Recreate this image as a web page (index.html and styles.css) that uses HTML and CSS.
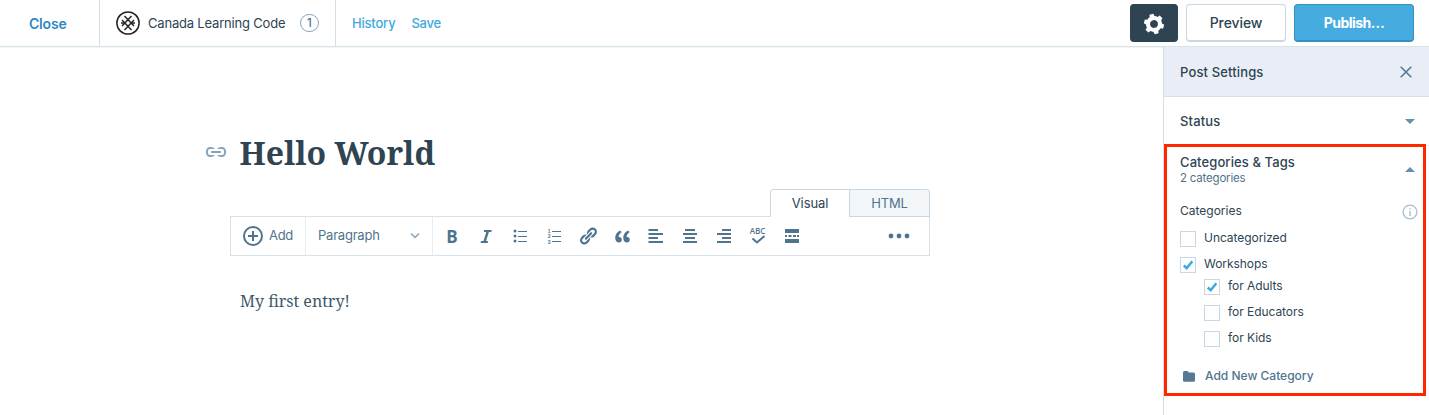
FILE: index.html
```
<!DOCTYPE html>
<html lang="en">
<head>
<meta charset="utf-8">
<title>Hello World - Post Editor</title>
<link rel="stylesheet" href="styles.css">
</head>
<body>
<header class="topbar">
  <a class="close">Close</a>
  <div class="site">
    <svg class="logo" width="24" height="24" viewBox="0 0 24 24" fill="none" stroke="#252525"><circle cx="12" cy="12" r="11.100" stroke-width="1.500"/><path d="M8.500 5l9.500 10M6 9l9.500 10M15.500 5L6 15M18 9L8.500 19" stroke-width="1.500"/><path d="M5 12h3M16 12h3" stroke-width="1.500"/></svg>
    <span class="site-name">Canada Learning Code</span>
    <span class="count">1</span>
  </div>
  <nav class="actions"><a class="history">History</a><a class="save">Save</a></nav>
  <div class="buttons">
    <button class="btn cog"><svg width="24" height="24" viewBox="0 0 24 24"><path transform="rotate(-15 12 12)" fill="#fff" d="M20 12c0-.568-.06-1.122-.174-1.656l1.834-1.612-2-3.464-2.322.786c-.82-.736-1.787-1.308-2.86-1.657L14 2h-4l-.48 2.396c-1.07.35-2.04.92-2.858 1.657L4.34 5.268l-2 3.464 1.834 1.612C4.06 10.878 4 11.432 4 12s.06 1.122.174 1.656L2.34 15.268l2 3.464 2.322-.786c.82.736 1.787 1.308 2.86 1.657L10 22h4l.48-2.396c1.07-.35 2.038-.92 2.858-1.657l2.322.786 2-3.464-1.834-1.613c.113-.535.174-1.09.174-1.656zm-8 4c-2.210 0-4-1.790-4-4s1.790-4 4-4 4 1.790 4 4-1.790 4-4 4z"/></svg></button>
    <button class="btn preview"><span>Preview</span></button>
    <button class="btn publish"><span>Publish…</span></button>
  </div>
</header>
<div class="body">
  <main class="editor">
    <div class="title-row">
      <svg class="permalink" width="24" height="24" viewBox="0 0 24 24"><path fill="#87a6bc" d="M17 13H7v-2h10v2zm1-6h-1c-1.631 0-3.065.792-3.977 2H18c1.103 0 2 .897 2 2v2c0 1.103-.897 2-2 2h-4.977c.913 1.208 2.347 2 3.977 2h1c2.209 0 4-1.791 4-4v-2c0-2.209-1.791-4-4-4zM2 11v2c0 2.209 1.791 4 4 4h1c1.630 0 3.065-.792 3.977-2H6c-1.103 0-2-.897-2-2v-2c0-1.103.897-2 2-2h4.977C10.065 7.792 8.631 7 7 7H6c-2.209 0-4 1.791-4 4z"/></svg>
      <h1 class="title">Hello World</h1>
    </div>
    <div class="tabs"><span class="tab active">Visual</span><span class="tab">HTML</span></div>
    <div class="toolbar">
      <div class="add"><svg width="22" height="22" viewBox="0 0 22 22" fill="none" stroke="#4f748e" stroke-width="2"><circle cx="11" cy="11" r="9"/><path d="M11 6v10M6 11h10"/></svg><span>Add</span></div>
      <div class="format"><span>Paragraph</span><svg width="12" height="8" viewBox="0 0 12 8" fill="none" stroke="#87a6bc" stroke-width="1.500"><path d="M2 1.500l4 4 4-4"/></svg></div>
      <div class="tools">
        <span class="tool bold">B</span>
        <span class="tool"><svg width="20" height="20" viewBox="0 0 20 20" fill="none" stroke="#4f748e"><path d="M8 5h7.500M4.800 16h7" stroke-width="2"/><path d="M11.900 5L8.500 16" stroke-width="2.500"/></svg></span>
        <span class="tool"><svg width="20" height="20" viewBox="0 0 20 20"><g fill="#4f748e"><circle cx="5" cy="5" r="1.500"/><circle cx="5" cy="10" r="1.500"/><circle cx="5" cy="15" r="1.500"/><path d="M8 5h9v1H8zM8 10h9v1H8zM8 15h9v1H8z"/></g></svg></span>
        <span class="tool"><svg width="20" height="20" viewBox="0 0 20 20"><g fill="#4f748e"><path d="M8 5h9v1H8zM8 10h9v1H8zM8 15h9v1H8z"/><g class="digits"><text x="3.800" y="6.500">1</text><text x="3.800" y="12">2</text><text x="3.800" y="17.500">3</text></g></g></svg></span>
        <span class="tool"><svg width="20" height="20" viewBox="0 0 20 20"><path fill="#4f748e" d="M17.740 2.760c1.680 1.690 1.680 4.410 0 6.100l-1.530 1.520c-1.120 1.120-2.700 1.470-4.140 1.090l2.620-2.610.76-.77.76-.76c.84-.84.84-2.200 0-3.040-.84-.85-2.200-.85-3.040 0l-.77.76-3.380 3.380c-.37-1.440-.02-3.020 1.100-4.140l1.520-1.530c1.690-1.680 4.420-1.680 6.100 0zM8.590 13.430l5.340-5.340c.42-.42.42-1.100 0-1.520-.44-.43-1.130-.39-1.530 0l-5.330 5.340c-.42.42-.42 1.100 0 1.520.44.43 1.130.39 1.520 0zm-.76 2.290l4.140-4.150c.38 1.440.03 3.020-1.090 4.140l-1.520 1.530c-1.690 1.680-4.410 1.680-6.100 0-1.680-1.680-1.680-4.420 0-6.100l1.530-1.520c1.120-1.120 2.700-1.470 4.140-1.100l-4.140 4.150c-.85.84-.85 2.200 0 3.050.84.84 2.200.84 3.040 0z"/></svg></span>
        <span class="tool"><svg width="21" height="21" viewBox="0 0 24 24"><path fill="#4f748e" d="M11.192 15.757c0-.88-.23-1.618-.69-2.217-.326-.412-.768-.683-1.327-.812-.55-.128-1.070-.137-1.540-.028-.16-.95.1-1.956.76-3.022.66-1.065 1.515-1.867 2.558-2.403L9.373 5c-.8.396-1.560.898-2.260 1.505-.71.607-1.340 1.305-1.900 2.094s-.98 1.680-1.250 2.690-.346 2.040-.217 3.100c.168 1.400.62 2.520 1.356 3.350.735.84 1.652 1.260 2.748 1.260.965 0 1.766-.29 2.400-.878.628-.576.94-1.365.94-2.368zm9.124 0c0-.88-.23-1.618-.69-2.217-.326-.42-.77-.692-1.327-.817-.56-.124-1.074-.13-1.540-.022-.16-.94.09-1.950.75-3.020.66-1.060 1.514-1.860 2.557-2.400L18.490 5c-.8.396-1.555.898-2.260 1.505-.708.607-1.340 1.305-1.894 2.094-.556.79-.97 1.680-1.240 2.690-.273 1-.345 2.040-.217 3.100.165 1.400.615 2.520 1.350 3.350.732.833 1.646 1.250 2.742 1.250.967 0 1.768-.29 2.402-.876.627-.576.942-1.365.942-2.368z"/></svg></span>
        <span class="tool"><svg width="20" height="20" viewBox="0 0 20 20" fill="#4f748e"><path d="M2.500 3h9.500v2H2.500zM2.500 7H17v2H2.500zM2.500 11h9.500v2H2.500zM2.500 15H17v2H2.500z"/></svg></span>
        <span class="tool"><svg width="20" height="20" viewBox="0 0 20 20" fill="#4f748e"><path d="M5 3h10v2H5zM3 7h14v2H3zM5 11h10v2H5zM3 15h14v2H3z"/></svg></span>
        <span class="tool"><svg width="20" height="20" viewBox="0 0 20 20" fill="#4f748e"><path d="M8 3h9v2H8zM3 7h14v2H3zM8 11h9v2H8zM3 15h14v2H3z"/></svg></span>
        <span class="tool"><svg class="spell" width="20" height="20" viewBox="0 0 20 20"><text x="9.500" y="8">ABC</text><path d="M4.500 12.500l4.500 4 7.500-6.500" fill="none" stroke="#4f748e" stroke-width="2"/></svg></span>
        <span class="tool"><svg width="20" height="20" viewBox="0 0 20 20" fill="#4f748e"><path d="M3 3h14v4H3zM3 9h2v2H3zM6.500 9h3v2h-3zM11 9h3v2h-3zM15 9h2v2h-2zM3 13h14v4H3z"/></svg></span>
      </div>
      <svg class="more" width="24" height="24" viewBox="0 0 24 24" fill="#4f748e"><circle cx="4" cy="12" r="2.400"/><circle cx="12" cy="12" r="2.400"/><circle cx="20" cy="12" r="2.400"/></svg>
    </div>
    <p class="content">My first entry!</p>
  </main>
  <aside class="sidebar">
    <div class="side-head"><span>Post Settings</span><svg width="12" height="12" viewBox="0 0 12 12" fill="none" stroke="#4f748e" stroke-width="1.500"><path d="M.7.7l10.600 10.600M11.300.7L.7 11.300"/></svg></div>
    <div class="side-status"><span>Status</span><i class="caret down"></i></div>
    <div class="side-cats-head"><div><div class="cats-title">Categories &amp; Tags</div><div class="cats-sub">2 categories</div></div><i class="caret up"></i></div>
    <div class="cats-label"><span>Categories</span><svg width="16" height="16" viewBox="0 0 16 16" fill="none" stroke="#a8bece"><circle cx="8" cy="8" r="6.900" stroke-width="1.400"/><path d="M8 7v5M8 4.200v1.500" stroke-width="1.400"/></svg></div>
    <div class="cat"><i class="box"></i><span>Uncategorized</span></div>
    <div class="cat tight"><i class="box"><svg width="14" height="14" viewBox="0 0 14 14"><path d="M2.800 7.500l2.900 2.700L11.300 3.200" fill="none" stroke="#3fa9dd" stroke-width="2.600"/></svg></i><span>Workshops</span></div>
    <div class="cat child"><i class="box"><svg width="14" height="14" viewBox="0 0 14 14"><path d="M2.800 7.500l2.900 2.700L11.300 3.200" fill="none" stroke="#3fa9dd" stroke-width="2.600"/></svg></i><span>for Adults</span></div>
    <div class="cat child"><i class="box"></i><span>for Educators</span></div>
    <div class="cat child"><i class="box"></i><span>for Kids</span></div>
    <div class="new-cat"><svg width="12" height="11" viewBox="0 0 12 11"><path fill="#537994" d="M1.500 0h3L6 1.500h4.500A1.500 1.500 0 0 1 12 3v6.500a1.300 1.300 0 0 1-1.300 1.300H1.300A1.300 1.300 0 0 1 0 9.500v-8A1.500 1.500 0 0 1 1.500 0z"/></svg><span>Add New Category</span></div>
    <div class="highlight"></div>
  </aside>
</div>
</body>
</html>
```
FILE: styles.css
```
* { box-sizing: border-box; }
body { margin: 0; width: 1429px; height: 415px; overflow: hidden; background: #fff; color: #2e4453; font: 13px/20px Inter, "Liberation Sans", sans-serif; display: flex; flex-direction: column; }
span { white-space: nowrap; }
svg { display: block; flex: none; }
.topbar { height: 47px; flex: none; display: flex; border-bottom: 1px solid #d8e3e8; box-shadow: 0 1px 0 #f0f5f7; }
.close { width: 100px; border-right: 1px solid #d3dfe6; padding: 14px 0 0 29px; color: #2e89c2; font-size: 14px; font-weight: 600; letter-spacing: -.2px; }
.site { width: 236px; border-right: 1px solid #d3dfe6; display: flex; align-items: center; padding-left: 16px; }
.site-name { margin-left: 8px; width: 152px; font-size: 13px; letter-spacing: -.19px; }
.count { width: 19px; height: 18px; border: 1px solid #87a6bc; border-radius: 9px; font-size: 11.5px; font-weight: 500; line-height: 16px; text-align: center; color: #4f748e; }
.actions { display: flex; gap: 16px; padding: 13px 0 0 16px; color: #3fa9dd; font-weight: 500; font-size: 13px; letter-spacing: -.2px; }
.buttons { display: flex; gap: 8px; margin-left: auto; padding: 4px 15px 0 0; }
.btn { height: 38px; border: 1px solid #c8d7e1; border-bottom-width: 2px; border-radius: 4px; background: #fff; color: #2e4453; font: 500 14px/20px Inter, sans-serif; letter-spacing: -.1px; display: flex; align-items: center; justify-content: center; padding: 1px 0 0; }
.cog { width: 48px; background: #2e4453; border-color: #2e4453; padding-top: 3px; }
.preview { width: 100px; }
.publish { width: 120px; background: #46abdf; border-color: #3590bf; color: #fff; font-weight: 700; letter-spacing: -.55px; }
.body { flex: 1; display: flex; min-height: 0; }
.editor { width: 1163px; padding: 80px 0 0 204px; }
.title-row { display: flex; height: 62px; }
.permalink { margin: 13px 0 0; }
.title { margin: 0 0 0 11.5px; font: bold 32px/52px "Noto Serif", serif; white-space: nowrap; }
.tabs { display: flex; width: 160px; height: 28px; margin-left: 566px; position: relative; border: 1px solid #c8d7e1; border-bottom: 0; border-radius: 4px 4px 0 0; font-size: 13px; letter-spacing: -.1px; }
.tab { flex: 1; text-align: center; padding-top: 3px; background: #f3f6f8; color: #4f748e; border-bottom: 1px solid #c8d7e1; border-left: 1px solid #c8d7e1; border-top-right-radius: 3px; }
.tab.active { flex: 0 0 78px; background: #fff; color: #2e4453; border-bottom-color: #fff; border-left: 0; border-radius: 3px 0 0 0; }
.toolbar { width: 700px; height: 40px; margin: -1px 0 0 26px; border: 1px solid #d7e3ea; display: flex; color: #4f748e; }
.add { width: 75px; border-right: 1px solid #e5edf2; display: flex; align-items: center; padding-left: 11px; gap: 5px; letter-spacing: -.3px; }
.format { width: 127px; border-right: 1px solid #e5edf2; display: flex; align-items: center; justify-content: space-between; padding: 0 11px 0 12px; letter-spacing: -.22px; }
.add span, .format span { padding-bottom: 2px; }
.tools { display: flex; margin-left: 2px; }
.tool { width: 34px; display: flex; align-items: center; justify-content: center; }
.bold { font: bold 17px/20px "Open Sans", sans-serif; padding-top: 1px; }
.digits { font: bold 5px "Liberation Sans", sans-serif; }
.spell { overflow: visible; }
.spell text { font: 600 8px "Open Sans", sans-serif; fill: #4f748e; text-anchor: middle; }
.more { margin: 7px 18px 0 auto; }
.content { margin: 31px 0 0 36px; font: 16px/28px "Noto Serif", serif; color: #3d596d; }
.sidebar { width: 266px; position: relative; border-left: 1px solid #d3dfe6; }
.side-head { height: 50px; background: #e9eef6; border-bottom: 1px solid #d5e0e7; display: flex; align-items: center; justify-content: space-between; padding: 1px 17px 0 16px; font-weight: 500; letter-spacing: .14px; }
.side-status { height: 49px; border-bottom: 1px solid #e4ecf1; display: flex; align-items: center; justify-content: space-between; padding: 0 14px 0 16px; font-weight: 500; letter-spacing: .15px; }
.caret { border: 5px solid transparent; }
.down { border-top-color: #6391b0; border-bottom: 0; }
.up { border-bottom-color: #6391b0; border-top: 0; }
.side-cats-head { height: 55px; display: flex; align-items: center; justify-content: space-between; padding: 0 14px 9px 16px; }
.cats-title { font-weight: 500; line-height: 17px; letter-spacing: .1px; }
.cats-sub { font-size: 11.5px; line-height: 14px; letter-spacing: -.2px; color: #4f748e; }
.cats-label { height: 30px; display: flex; justify-content: space-between; padding: 0 11px 0 16px; font-size: 12px; }
.cats-label svg { margin-top: 3px; }
.cat { display: flex; height: 26px; padding-left: 16px; gap: 8px; font-size: 12px; line-height: 14px; letter-spacing: -.05px; }
.tight { height: 22px; }
.child { padding-left: 40px; }
.box { width: 16px; height: 16px; border: 1px solid #c8d7e1; }
.new-cat { display: flex; align-items: center; gap: 10px; margin-top: 9px; padding-left: 19px; color: #4f748e; font-size: 12px; font-weight: 500; }
.highlight { position: absolute; left: 0; top: 97px; width: 262px; height: 252px; border: 3px solid #ff2600; }
```
